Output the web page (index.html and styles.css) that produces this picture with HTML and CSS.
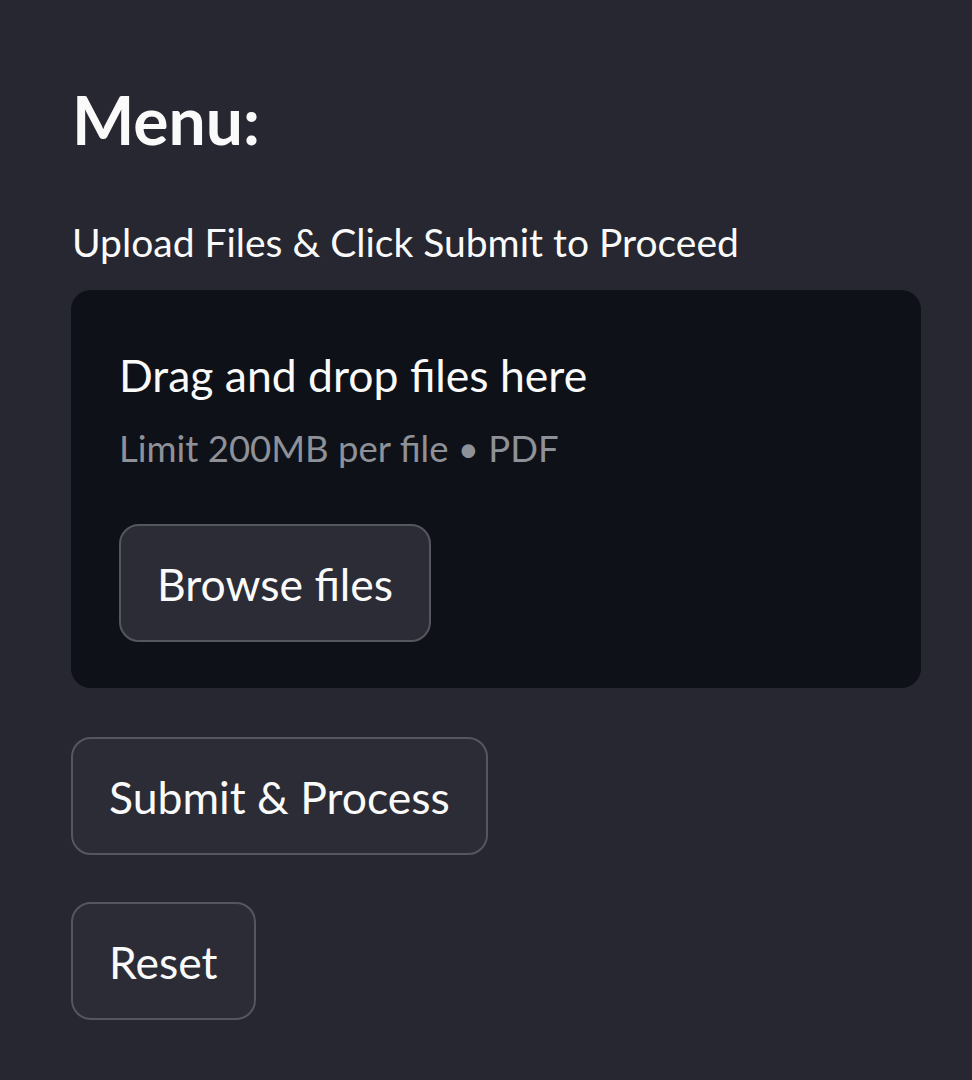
FILE: index.html
```html
<!DOCTYPE html>
<html lang="en">
<head>
<meta charset="utf-8">
<title>Menu</title>
<link rel="stylesheet" href="styles.css">
</head>
<body>
<aside class="sidebar">
  <h2 class="title">Menu:</h2>
  <label class="label">Upload Files &amp; Click Submit to Proceed</label>
  <section class="dropzone">
    <div class="drop-main">Drag and drop files here</div>
    <div class="drop-sub">Limit 200MB per file • PDF</div>
    <button class="btn browse">Browse files</button>
  </section>
  <div class="actions">
    <button class="btn">Submit &amp; Process</button>
    <button class="btn">Reset</button>
  </div>
</aside>
</body>
</html>
```

FILE: styles.css
```css
html, body {
  margin: 0;
  padding: 0;
  background: #262730;
  height: 100%;
}
body {
  font-family: Lato, "Liberation Sans", sans-serif;
  color: #fafafa;
}
.sidebar {
  display: flex;
  flex-direction: column;
  align-items: flex-start;
  padding: 80px 51px 0 71px;
}
.title {
  margin: 0;
  font-size: 66px;
  font-weight: 700;
  line-height: 80px;
  padding-left: 1px;
}
.label {
  margin-top: 58px;
  font-size: 39px;
  line-height: 48px;
  padding-left: 1px;
}
.dropzone {
  align-self: stretch;
  margin-top: 24px;
  background: #0e1117;
  border-radius: 20px;
  padding: 57px 48px 46px 48px;
  display: flex;
  flex-direction: column;
  align-items: flex-start;
}
.drop-main {
  font-size: 44.5px;
  line-height: 56px;
}
.drop-sub {
  margin-top: 21px;
  font-size: 36.5px;
  line-height: 48px;
  color: #8f9199;
}
.btn {
  font-family: inherit;
  color: #fafafa;
  background: #2b2c36;
  border: 2px solid #55565e;
  border-radius: 20px;
  height: 118px;
  padding: 0 36px;
  font-size: 44.5px;
  cursor: pointer;
}
.browse {
  margin-top: 52px;
}
.actions {
  display: flex;
  flex-direction: column;
  align-items: flex-start;
  gap: 47px;
  margin-top: 49px;
}
```
